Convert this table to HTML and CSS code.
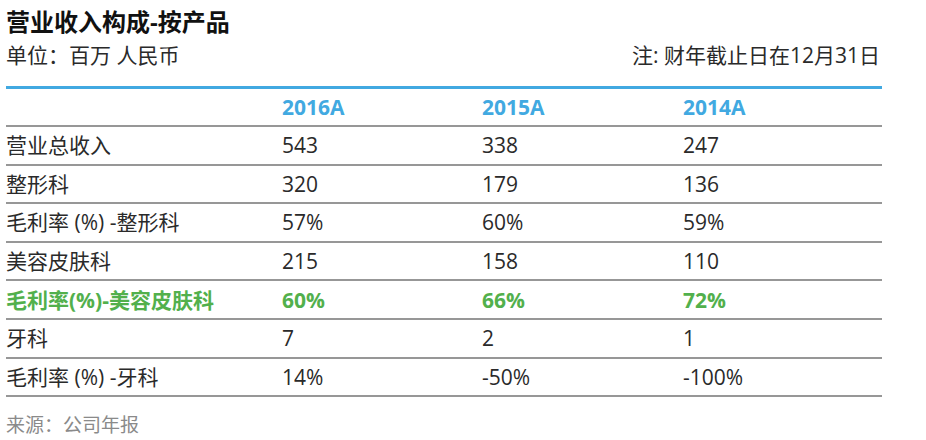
FILE: index.html
```html
<!DOCTYPE html>
<html lang="zh">
<head>
<meta charset="utf-8">
<link rel="stylesheet" href="styles.css">
</head>
<body>
<div class="page">
  <h1 class="title">营业收入构成-按产品</h1>
  <div class="meta">
    <span>单位：百万 人民币</span>
    <span>注: 财年截止日在12月31日</span>
  </div>
  <div class="table">
    <div class="row head">
      <span></span><span>2016A</span><span>2015A</span><span>2014A</span>
    </div>
    <div class="row"><span>营业总收入</span><span>543</span><span>338</span><span>247</span></div>
    <div class="row"><span>整形科</span><span>320</span><span>179</span><span>136</span></div>
    <div class="row"><span>毛利率 (%) -整形科</span><span>57%</span><span>60%</span><span>59%</span></div>
    <div class="row"><span>美容皮肤科</span><span>215</span><span>158</span><span>110</span></div>
    <div class="row green"><span>毛利率(%)-美容皮肤科</span><span>60%</span><span>66%</span><span>72%</span></div>
    <div class="row"><span>牙科</span><span>7</span><span>2</span><span>1</span></div>
    <div class="row"><span>毛利率 (%) -牙科</span><span>14%</span><span>-50%</span><span>-100%</span></div>
  </div>
  <div class="source">来源：公司年报</div>
</div>
</body>
</html>
```
FILE: styles.css
```css
html, body {
  margin: 0;
  padding: 0;
  background: #fff;
}
body {
  font-family: "Open Sans", "Noto Sans CJK SC", sans-serif;
  color: #2a2a2a;
}
.page {
  width: 876px;
  padding: 7px 0 0 6px;
}
.title {
  margin: 0;
  font-size: 24px;
  line-height: 30px;
  font-weight: 700;
  color: #111;
}
.meta {
  margin-top: 5px;
  display: flex;
  justify-content: space-between;
  font-size: 21px;
  line-height: 26px;
  color: #2a2a2a;
  padding-right: 2px;
}
.table {
  margin-top: 18px;
  border-top: 3px solid #41a9e1;
}
.row {
  display: grid;
  grid-template-columns: 276px 200px 201px 1fr;
  height: 36.6px;
  align-items: center;
  font-size: 21px;
  border-bottom: 2px solid #979797;
}
.row span {
  white-space: nowrap;
  line-height: 26px;
}
.row.head {
  font-weight: 700;
  color: #41a9e1;
  height: 36px;
}
.row.green {
  font-weight: 700;
  color: #52b04c;
}
.source {
  margin-top: 16px;
  font-size: 19px;
  line-height: 24px;
  color: #8a8a8a;
}
```
